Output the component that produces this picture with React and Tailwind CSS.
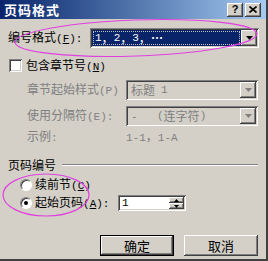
import React from "react";

const sunken =
  "shadow-[inset_1px_1px_0_#808080,inset_-1px_-1px_0_#ffffff,inset_2px_2px_0_#404040,inset_-2px_-2px_0_#d4d0c8]";
const raised =
  "shadow-[inset_-1px_-1px_0_#404040,inset_1px_1px_0_#ffffff,inset_-2px_-2px_0_#808080,inset_2px_2px_0_#d4d0c8]";

function A({ children }) {
  return <span className="font-['Liberation_Mono',monospace] text-[11px]">{children}</span>;
}

function Arrow({ color = "#000", w = 7, h = 4 }) {
  return (
    <svg width={w} height={h} viewBox={`0 0 ${w} ${h}`}>
      <path d={`M0 0H${w}L${w / 2} ${h}Z`} fill={color} />
    </svg>
  );
}

function DropBtn({ disabled }) {
  return (
    <div className={`w-[16px] h-full bg-[#d4d0c8] flex items-center justify-center ${raised}`}>
      <Arrow color={disabled ? "#808080" : "#000"} />
    </div>
  );
}

function Radio({ checked }) {
  return (
    <div className="w-[12px] h-[12px] rounded-full bg-white border border-t-[#808080] border-l-[#808080] border-b-white border-r-white flex items-center justify-center shadow-[inset_1px_1px_0_#404040]">
      {checked && <div className="w-[4px] h-[4px] rounded-full bg-black" />}
    </div>
  );
}

export default function App() {
  return (
    <div className="relative w-[268px] h-[261px] overflow-hidden bg-[#d4d0c8] border-r-2 border-b-2 border-r-[#404040] border-b-[#404040] font-['Noto_Sans_CJK_SC',sans-serif] text-[12px] leading-none text-black">
      {/* title bar */}
      <div className="h-[19px] flex items-center justify-between bg-linear-to-r from-[#0a246a] to-[#a6caf0] pl-[4px] pr-[5px]">
        <span className="text-white font-bold text-[13px] tracking-[1px]">页码格式</span>
        <div className="flex gap-[2px]">
          <div className={`w-[16px] h-[14px] bg-[#d4d0c8] flex items-center justify-center text-[11px] font-bold font-['Liberation_Sans',sans-serif] ${raised}`}>
            ?
          </div>
          <div className={`w-[16px] h-[14px] bg-[#d4d0c8] flex items-center justify-center ${raised}`}>
            <svg width="8" height="7" viewBox="0 0 8 7">
              <path d="M0.5 0.5L7.5 6.5M7.5 0.5L0.5 6.5" stroke="#000" strokeWidth="1.6" />
            </svg>
          </div>
        </div>
      </div>

      {/* number format */}
      <div className="flex items-center mt-[9px] h-[20px] pl-[8px]">
        <span className="w-[82px]">
          编号格式<A>(<span className="underline">F</span>):</A>
        </span>
        <div className={`w-[169px] h-[20px] bg-white p-[2px] flex ${sunken}`}>
          <div className="flex-1 bg-[#0a246a] p-[1px]">
            <div className="h-full border border-dotted border-[#c0c0c0] flex items-center pl-[1px] text-white text-[12px]">
              <A>1</A>，<A>2</A>，<A>3</A>，<span className="font-bold">⋯</span>
            </div>
          </div>
          <DropBtn />
        </div>
      </div>

      {/* include chapter */}
      <div className="flex items-center mt-[11px] h-[13px] pl-[9px]">
        <div className={`w-[13px] h-[13px] bg-white ${sunken}`} />
        <span className="ml-[4px]">
          包含章节号<A>(<span className="underline">N</span>)</A>
        </span>
      </div>

      <div className="flex items-center mt-[8px] h-[20px] pl-[27px] text-[#808080]">
        <span className="w-[99px]">
          章节起始样式<A>(P)</A>
        </span>
        <div className={`w-[132px] h-[20px] bg-[#d4d0c8] p-[2px] flex ${sunken}`}>
          <div className="flex-1 flex items-center pl-[3px] gap-[6px]">
            <span>标题</span>
            <A>1</A>
          </div>
          <DropBtn disabled />
        </div>
      </div>

      <div className="flex items-center mt-[6px] h-[20px] pl-[27px] text-[#808080]">
        <span className="w-[99px]">
          使用分隔符<A>(E):</A>
        </span>
        <div className={`w-[132px] h-[20px] bg-[#d4d0c8] p-[2px] flex ${sunken}`}>
          <div className="flex-1 flex items-center pl-[3px]">
            <span className="w-[26px]">
              <A>-</A>
            </span>
            <A>(</A>连字符<A>)</A>
          </div>
          <DropBtn disabled />
        </div>
      </div>

      <div className="flex items-center mt-[5px] h-[12px] pl-[27px] text-[#808080]">
        <span className="w-[99px]">
          示例<A>:</A>
        </span>
        <span>
          <A>1-1</A>，<A>1-A</A>
        </span>
      </div>

      {/* page numbering group */}
      <div className="flex items-center mt-[16px] h-[12px] pl-[8px] pr-[8px]">
        <span>页码编号</span>
        <div className="flex-1 ml-[6px] h-[2px] border-t border-t-[#808080] border-b border-b-white" />
      </div>

      <div className="flex items-center mt-[8px] h-[12px] pl-[20px]">
        <Radio />
        <span className="ml-[3px]">
          续前节<A>(<span className="underline">C</span>)</A>
        </span>
      </div>

      <div className="flex items-center mt-[4px] h-[16px] pl-[20px]">
        <Radio checked />
        <span className="ml-[3px] w-[83px]">
          起始页码<A>(<span className="underline">A</span>):</A>
        </span>
        <div className={`w-[68px] h-[16px] bg-white p-[2px] flex ${sunken}`}>
          <div className="flex-1 flex items-center pl-[2px]">
            <A>1</A>
          </div>
          <div className="w-[15px] flex flex-col">
            <div className={`flex-1 bg-[#d4d0c8] flex items-center justify-center ${raised}`}>
              <svg width="5" height="3" viewBox="0 0 5 3"><path d="M2.5 0L5 3H0Z" fill="#000" /></svg>
            </div>
            <div className={`flex-1 bg-[#d4d0c8] flex items-center justify-center ${raised}`}>
              <Arrow w={5} h={3} />
            </div>
          </div>
        </div>
      </div>

      {/* buttons */}
      <div className="flex mt-[24px] pl-[100px] gap-[10px]">
        <div className="w-[74px] h-[21px] border border-black">
          <div className={`w-full h-full bg-[#d4d0c8] flex items-center justify-center text-[13px] ${raised}`}>确定</div>
        </div>
        <div className={`w-[74px] h-[21px] bg-[#d4d0c8] flex items-center justify-center text-[13px] ${raised}`}>取消</div>
      </div>

      {/* hand-drawn annotations */}
      <svg className="absolute inset-0 pointer-events-none" width="268" height="261">
        <ellipse cx="136" cy="38" rx="121" ry="18" fill="none" stroke="#e040e0" strokeWidth="1.2" transform="rotate(-2 136 38)" />
        <ellipse cx="46" cy="195" rx="43" ry="21" fill="none" stroke="#e040e0" strokeWidth="1.2" />
      </svg>
    </div>
  );
}
